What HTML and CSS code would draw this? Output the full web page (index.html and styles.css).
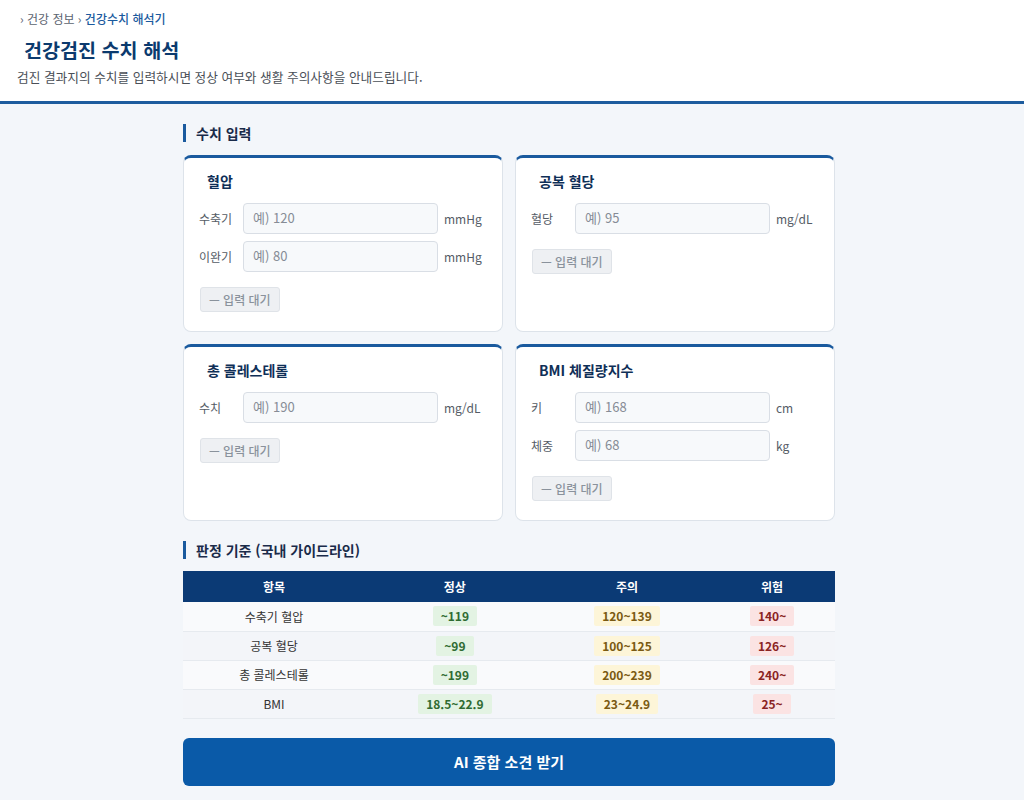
FILE: index.html
```html
<!DOCTYPE html>
<html lang="ko">
<head>
<meta charset="utf-8">
<title>건강검진 수치 해석</title>
<link rel="stylesheet" href="styles.css">
</head>
<body>
<header class="header">
  <div class="crumb">› 건강 정보 › <span class="crumb-cur">건강수치 해석기</span></div>
  <h1 class="title">건강검진 수치 해석</h1>
  <p class="desc">검진 결과지의 수치를 입력하시면 정상 여부와 생활 주의사항을 안내드립니다.</p>
</header>
<main class="main">
  <div class="wrap">
    <h2 class="sec">수치 입력</h2>
    <div class="cards">
      <section class="card">
        <h3 class="card-title">혈압</h3>
        <div class="row"><span class="lbl">수축기</span><input class="inp" placeholder="예) 120"><span class="unit">mmHg</span></div>
        <div class="row"><span class="lbl">이완기</span><input class="inp" placeholder="예) 80"><span class="unit">mmHg</span></div>
        <button class="status">— 입력 대기</button>
      </section>
      <section class="card">
        <h3 class="card-title">공복 혈당</h3>
        <div class="row"><span class="lbl">혈당</span><input class="inp" placeholder="예) 95"><span class="unit">mg/dL</span></div>
        <button class="status">— 입력 대기</button>
      </section>
      <section class="card">
        <h3 class="card-title">총 콜레스테롤</h3>
        <div class="row"><span class="lbl">수치</span><input class="inp" placeholder="예) 190"><span class="unit">mg/dL</span></div>
        <button class="status">— 입력 대기</button>
      </section>
      <section class="card">
        <h3 class="card-title">BMI 체질량지수</h3>
        <div class="row"><span class="lbl">키</span><input class="inp" placeholder="예) 168"><span class="unit">cm</span></div>
        <div class="row"><span class="lbl">체중</span><input class="inp" placeholder="예) 68"><span class="unit">kg</span></div>
        <button class="status">— 입력 대기</button>
      </section>
    </div>

    <h2 class="sec sec2">판정 기준 (국내 가이드라인)</h2>
    <table class="tbl">
      <colgroup><col class="c1"><col class="c2"><col class="c3"><col class="c4"></colgroup>
      <thead><tr><th>항목</th><th>정상</th><th>주의</th><th>위험</th></tr></thead>
      <tbody>
        <tr><td>수축기 혈압</td><td><span class="pill ok">~119</span></td><td><span class="pill warn">120~139</span></td><td><span class="pill bad">140~</span></td></tr>
        <tr><td>공복 혈당</td><td><span class="pill ok">~99</span></td><td><span class="pill warn">100~125</span></td><td><span class="pill bad">126~</span></td></tr>
        <tr><td>총 콜레스테롤</td><td><span class="pill ok">~199</span></td><td><span class="pill warn">200~239</span></td><td><span class="pill bad">240~</span></td></tr>
        <tr><td>BMI</td><td><span class="pill ok">18.5~22.9</span></td><td><span class="pill warn">23~24.9</span></td><td><span class="pill bad">25~</span></td></tr>
      </tbody>
    </table>

    <button class="cta">AI 종합 소견 받기</button>
  </div>
</main>
</body>
</html>
```

FILE: styles.css
```css
* { box-sizing: border-box; }
html, body { margin: 0; padding: 0; }
body {
  font-family: "Noto Sans CJK KR", "Noto Sans", sans-serif;
  background: #f3f6fa;
  color: #222;
}
.header {
  background: #fff;
  padding: 10px 17px 11px;
  border-bottom: 3px solid #1d5c9e;
  height: 104px;
}
.crumb {
  font-size: 12px;
  color: #5b6470;
  line-height: 18px;
  padding-left: 3px;
}
.crumb-cur { color: #1a5a9e; font-weight: 500; }
.title {
  margin: 8px 0 0 7px;
  font-size: 19.6px;
  line-height: 28px;
  font-weight: 700;
  color: #0b3a6e;
}
.desc {
  margin: 4px 0 0;
  font-size: 12.7px;
  line-height: 18px;
  color: #4a4f57;
}
.main { padding: 20px 0 14px; }
.wrap {
  width: 652px;
  margin-left: calc(50% - 329px);
}
.sec {
  margin: 0;
  font-size: 14px;
  line-height: 18px;
  font-weight: 700;
  color: #1a2b4a;
  border-left: 3px solid #1a5a9e;
  padding-left: 10px;
}
.sec2 { margin-top: 20px; }
.cards {
  display: grid;
  grid-template-columns: 1fr 1fr;
  gap: 12px;
  margin-top: 13px;
}
.card {
  background: #fff;
  border: 1px solid #dde3ea;
  border-top: 3px solid #1a5a9e;
  border-radius: 8px;
  padding: 13px 15px 19px;
  min-height: 176px;
}
.card-title {
  margin: 0 0 12px 8px;
  font-size: 14px;
  line-height: 20px;
  font-weight: 700;
  color: #0f2f57;
}
.row {
  display: grid;
  grid-template-columns: 38px 1fr 43px;
  column-gap: 6px;
  align-items: center;
  margin-bottom: 7px;
}
.lbl { font-size: 12px; color: #555c66; }
.unit { font-size: 12px; color: #555c66; }
.inp {
  height: 31px;
  width: 100%;
  border: 1px solid #d9dee5;
  border-radius: 4px;
  background: #f7f9fb;
  padding: 0 9px 2px;
  font-family: inherit;
  font-size: 13px;
  color: #333;
}
.inp::placeholder { color: #868c96; }
.status {
  margin-top: 8px;
  margin-left: 1px;
  height: 25px;
  padding: 0 8px;
  border: 1px solid #dfe3e8;
  border-radius: 3px;
  background: #eef0f3;
  color: #8a929c;
  font-family: inherit;
  font-size: 12px;
  font-weight: 500;
}
.tbl {
  width: 100%;
  margin-top: 12px;
  border-collapse: collapse;
  table-layout: fixed;
  font-size: 12px;
}
.c1 { width: 27.9%; }
.c2 { width: 27.6%; }
.c3 { width: 25.2%; }
.c4 { width: 19.3%; }
.tbl th {
  background: #0b3a75;
  color: #fff;
  font-weight: 700;
  height: 31px;
  padding: 0;
}
.tbl td {
  height: 29px;
  text-align: center;
  color: #333;
  border-bottom: 1px solid #e6eaef;
  padding: 0;
}
.tbl tbody tr:nth-child(odd) td { background: #f9fafc; }
.tbl tbody tr:nth-child(even) td { background: #f3f5f9; }
.pill {
  display: inline-block;
  padding: 0 8px;
  line-height: 20px;
  border-radius: 2px;
  font-weight: 700;
}
.ok { background: #e3f3e3; color: #2f6b32; }
.warn { background: #fdf5d8; color: #7a5a12; }
.bad { background: #fbe3e3; color: #8a2323; }
.cta {
  display: block;
  width: 100%;
  margin-top: 19px;
  height: 48px;
  border: 0;
  border-radius: 6px;
  background: #0a5aa8;
  color: #fff;
  font-family: inherit;
  font-size: 15px;
  font-weight: 700;
}
```
